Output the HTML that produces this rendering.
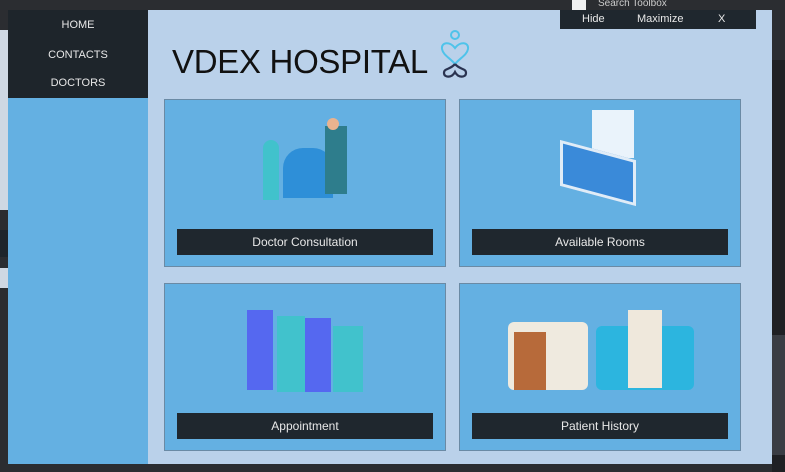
<!DOCTYPE html>
<html><head><style>
body{margin:0;width:785px;height:472px;background:#2b2d31;position:relative;overflow:hidden;font-family:"Liberation Sans",sans-serif}
.a{position:absolute}
.nav{left:8px;top:10px;width:140px;height:88px;background:#1e252b;color:#e8e8e8;font-size:11px;text-align:center}
.nav div{position:absolute;width:100%}
.left{left:8px;top:98px;width:140px;height:366px;background:#64b0e2}
.main{left:148px;top:10px;width:624px;height:454px;background:#bad1ea}
.card{background:#64b0e2;border:1px solid #6a8aa5;width:280px;height:166px}
.btn{position:absolute;left:12px;top:129px;width:256px;height:26px;background:#1f272e;color:#e8e8e8;font-size:12px;text-align:center;line-height:26px}
.bar{left:560px;top:10px;width:196px;height:19px;background:#1f272e;color:#e8e8e8;font-size:11px}
</style></head><body>
<div class="a" style="left:0;top:30px;width:8px;height:180px;background:#cfd8e3"></div>
<div class="a" style="left:0;top:230px;width:8px;height:27px;background:#1e252b"></div>
<div class="a" style="left:0;top:268px;width:8px;height:20px;background:#cfd8e3"></div>
<div class="a" style="left:572px;top:0;width:14px;height:10px;background:#f0f0f0"></div>
<div class="a" style="left:598px;top:0;width:150px;height:10px;color:#ccc;font-size:10px;line-height:8px;overflow:hidden">Search Toolbox</div>
<div class="a" style="left:772px;top:60px;width:13px;height:412px;background:#1f2024"></div>
<div class="a" style="left:772px;top:335px;width:13px;height:120px;background:#3a3d44"></div>
<div class="a nav"><div style="top:9px">HOME</div><div style="top:39px">CONTACTS</div><div style="top:67px">DOCTORS</div></div>
<div class="a left"></div>
<div class="a main">
 <div class="a" style="left:24px;top:33px;font-size:33px;color:#111;letter-spacing:-0.3px">VDEX HOSPITAL</div>
 <svg class="a" style="left:290px;top:18px" width="36" height="58" viewBox="0 0 36 58"><circle cx="17" cy="7" r="4" fill="none" stroke="#4fc3ea" stroke-width="2"/><path d="M17 20 C12 13,3 14,4 21 C5 27,12 30,17 36 C22 30,29 27,30 21 C31 14,22 13,17 20Z" fill="none" stroke="#4fc3ea" stroke-width="2"/><path d="M17 36 C12 42,6 40,6 45 C6 50,14 50,17 44 C20 50,28 50,28 45 C28 40,22 42,17 36" fill="none" stroke="#2a3350" stroke-width="2.2"/></svg>
 <div class="a card" style="left:16px;top:89px"><div class="a" style="left:90px;top:18px;width:100px;height:88px">
  <div class="a" style="left:8px;top:22px;width:16px;height:60px;background:#41c2cc;border-radius:8px 8px 0 0"></div>
  <div class="a" style="left:28px;top:30px;width:50px;height:50px;background:#2e8fd8;border-radius:20px 20px 0 0"></div>
  <div class="a" style="left:70px;top:8px;width:22px;height:68px;background:#2e7d8c"></div>
  <div class="a" style="left:72px;top:0;width:12px;height:12px;background:#e9b38f;border-radius:50%"></div></div>
  <div class="btn">Doctor Consultation</div></div>
 <div class="a card" style="left:311px;top:89px"><div class="a" style="left:92px;top:10px;width:90px;height:100px">
  <div class="a" style="left:40px;top:0;width:42px;height:48px;background:#eaf3fb"></div>
  <div class="a" style="left:8px;top:40px;width:70px;height:40px;background:#3a8ad9;border:3px solid #e0ecf7;transform:skewY(15deg)"></div></div>
  <div class="btn">Available Rooms</div></div>
 <div class="a card" style="left:16px;top:273px"><div class="a" style="left:80px;top:12px;width:120px;height:98px">
  <div class="a" style="left:2px;top:14px;width:26px;height:80px;background:#5568f0"></div>
  <div class="a" style="left:32px;top:20px;width:28px;height:76px;background:#41c2cc"></div>
  <div class="a" style="left:60px;top:22px;width:26px;height:74px;background:#5568f0"></div>
  <div class="a" style="left:88px;top:30px;width:30px;height:66px;background:#41c2cc"></div></div>
  <div class="btn">Appointment</div></div>
 <div class="a card" style="left:311px;top:273px"><div class="a" style="left:48px;top:12px;width:190px;height:96px">
  <div class="a" style="left:0;top:26px;width:80px;height:68px;background:#efeadf;border-radius:6px"></div>
  <div class="a" style="left:6px;top:36px;width:32px;height:58px;background:#b76a3a"></div>
  <div class="a" style="left:88px;top:30px;width:98px;height:64px;background:#2cb5df;border-radius:6px"></div>
  <div class="a" style="left:120px;top:14px;width:34px;height:78px;background:#efe8dc"></div></div>
  <div class="btn">Patient History</div></div>
</div>
<div class="a bar"><span class="a" style="left:22px;top:3px">Hide</span><span class="a" style="left:77px;top:3px">Maximize</span><span class="a" style="left:158px;top:3px">X</span></div>
</body></html>
